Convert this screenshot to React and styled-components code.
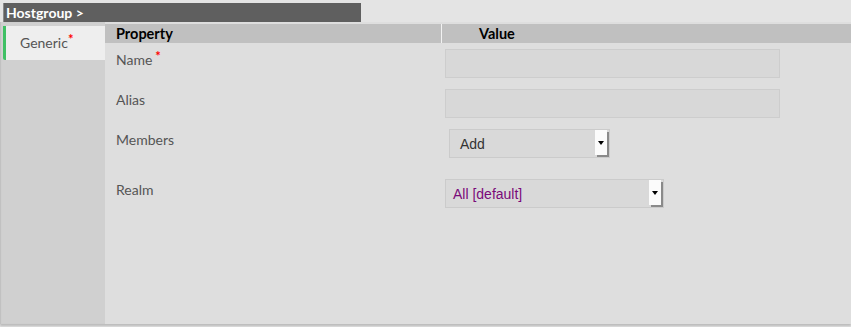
import React from 'react';
import styled, { createGlobalStyle } from 'styled-components';

const GlobalStyle = createGlobalStyle`
  html, body {
    margin: 0;
    padding: 0;
    background: #e4e4e4;
    font-family: Lato, 'Open Sans', sans-serif;
  }
`;

const Page = styled.div`
  width: 851px;
  height: 327px;
  overflow: hidden;
`;

const TitleBar = styled.div`
  margin: 3px 0 0 3px;
  width: 358px;
  height: 19px;
  background: #5f5f5f;
  border-left: 1px solid #8a8a8a;
  color: #fff;
  font-weight: 700;
  font-size: 14px;
  line-height: 19px;
  padding-left: 2px;
  box-sizing: border-box;
`;

const Panel = styled.div`
  display: flex;
  height: 302px;
  box-shadow: 0 2px 2px rgba(0, 0, 0, 0.18);
`;

const Sidebar = styled.div`
  width: 105px;
  background: #d0d0d0;
  padding-top: 4px;
  box-sizing: border-box;
  box-shadow: inset 1px 0 1px rgba(0, 0, 0, 0.08);
`;

const Tab = styled.div`
  margin-left: 3px;
  height: 34px;
  background: #eeeeee;
  border-left: 3px solid #3fc064;
  border-radius: 0 0 0 2px;
  color: #555;
  font-size: 14px;
  line-height: 34px;
  padding-left: 14px;
`;

const Required = styled.span`
  position: relative;
  top: -4px;
  color: #f00;
  font-size: 13px;
  font-weight: 700;
  line-height: 0;
  margin-left: ${(p) => (p.spaced ? '3px' : '0')};
`;

const Main = styled.div`
  flex: 1;
  background: #dedede;
  padding-top: 2px;
`;

const Grid = styled.div`
  display: grid;
  grid-template-columns: 336px 1fr;
`;

const HeadCell = styled.div`
  background: #c0c0c0;
  height: 19px;
  line-height: 19px;
  font-size: 14.5px;
  font-weight: 700;
  color: #000;
  padding-left: ${(p) => p.indent}px;
  border-left: ${(p) => (p.divider ? '1px solid #f2f2f2' : 'none')};
`;

const Label = styled.div`
  height: ${(p) => p.h}px;
  padding: 7px 0 0 11px;
  box-sizing: border-box;
  color: #555;
  font-size: 14px;
  line-height: 20px;
`;

const Value = styled.div`
  height: ${(p) => p.h}px;
  padding: 6px 0 0 ${(p) => p.indent || 4}px;
  box-sizing: border-box;
`;

const TextInput = styled.div`
  width: 335px;
  height: 29px;
  box-sizing: border-box;
  background: #d8d8d8;
  border: 1px solid #cdcdcd;
`;

const Select = styled.div`
  display: flex;
  align-items: center;
  width: ${(p) => p.w}px;
  height: 29px;
  box-sizing: border-box;
  background: #d9d9d9;
  border: 1px solid #cbcbcb;
  font-family: 'Liberation Sans', Arial, sans-serif;
  font-size: 14px;
  color: ${(p) => p.color};
`;

const SelectText = styled.span`
  flex: 1;
  padding: 1px 0 0 ${(p) => p.pad}px;
`;

const Arrow = styled.div`
  width: 12px;
  height: 25px;
  margin-right: 2px;
  background: #fbfbfb;
  box-shadow: 2px 2px 0 #8a8a8a;
  position: relative;
  top: -1px;
  display: flex;
  align-items: center;
  justify-content: center;

  &::after {
    content: '';
    border-left: 3px solid transparent;
    border-right: 3px solid transparent;
    border-top: 4px solid #000;
  }
`;

export default function App() {
  return (
    <Page>
      <GlobalStyle />
      <TitleBar>Hostgroup &gt;</TitleBar>
      <Panel>
        <Sidebar>
          <Tab>
            Generic<Required>*</Required>
          </Tab>
        </Sidebar>
        <Main>
          <Grid>
            <HeadCell indent={11}>Property</HeadCell>
            <HeadCell indent={37} divider>
              Value
            </HeadCell>

            <Label h={40}>
              Name<Required spaced>*</Required>
            </Label>
            <Value h={40}>
              <TextInput />
            </Value>

            <Label h={40}>Alias</Label>
            <Value h={40}>
              <TextInput />
            </Value>

            <Label h={50}>Members</Label>
            <Value h={50} indent={8}>
              <Select w={161} color="#333">
                <SelectText pad={10}>Add</SelectText>
                <Arrow />
              </Select>
            </Value>

            <Label h={50}>Realm</Label>
            <Value h={50}>
              <Select w={219} color="#7a0a7a">
                <SelectText pad={7}>All [default]</SelectText>
                <Arrow />
              </Select>
            </Value>
          </Grid>
        </Main>
      </Panel>
    </Page>
  );
}
